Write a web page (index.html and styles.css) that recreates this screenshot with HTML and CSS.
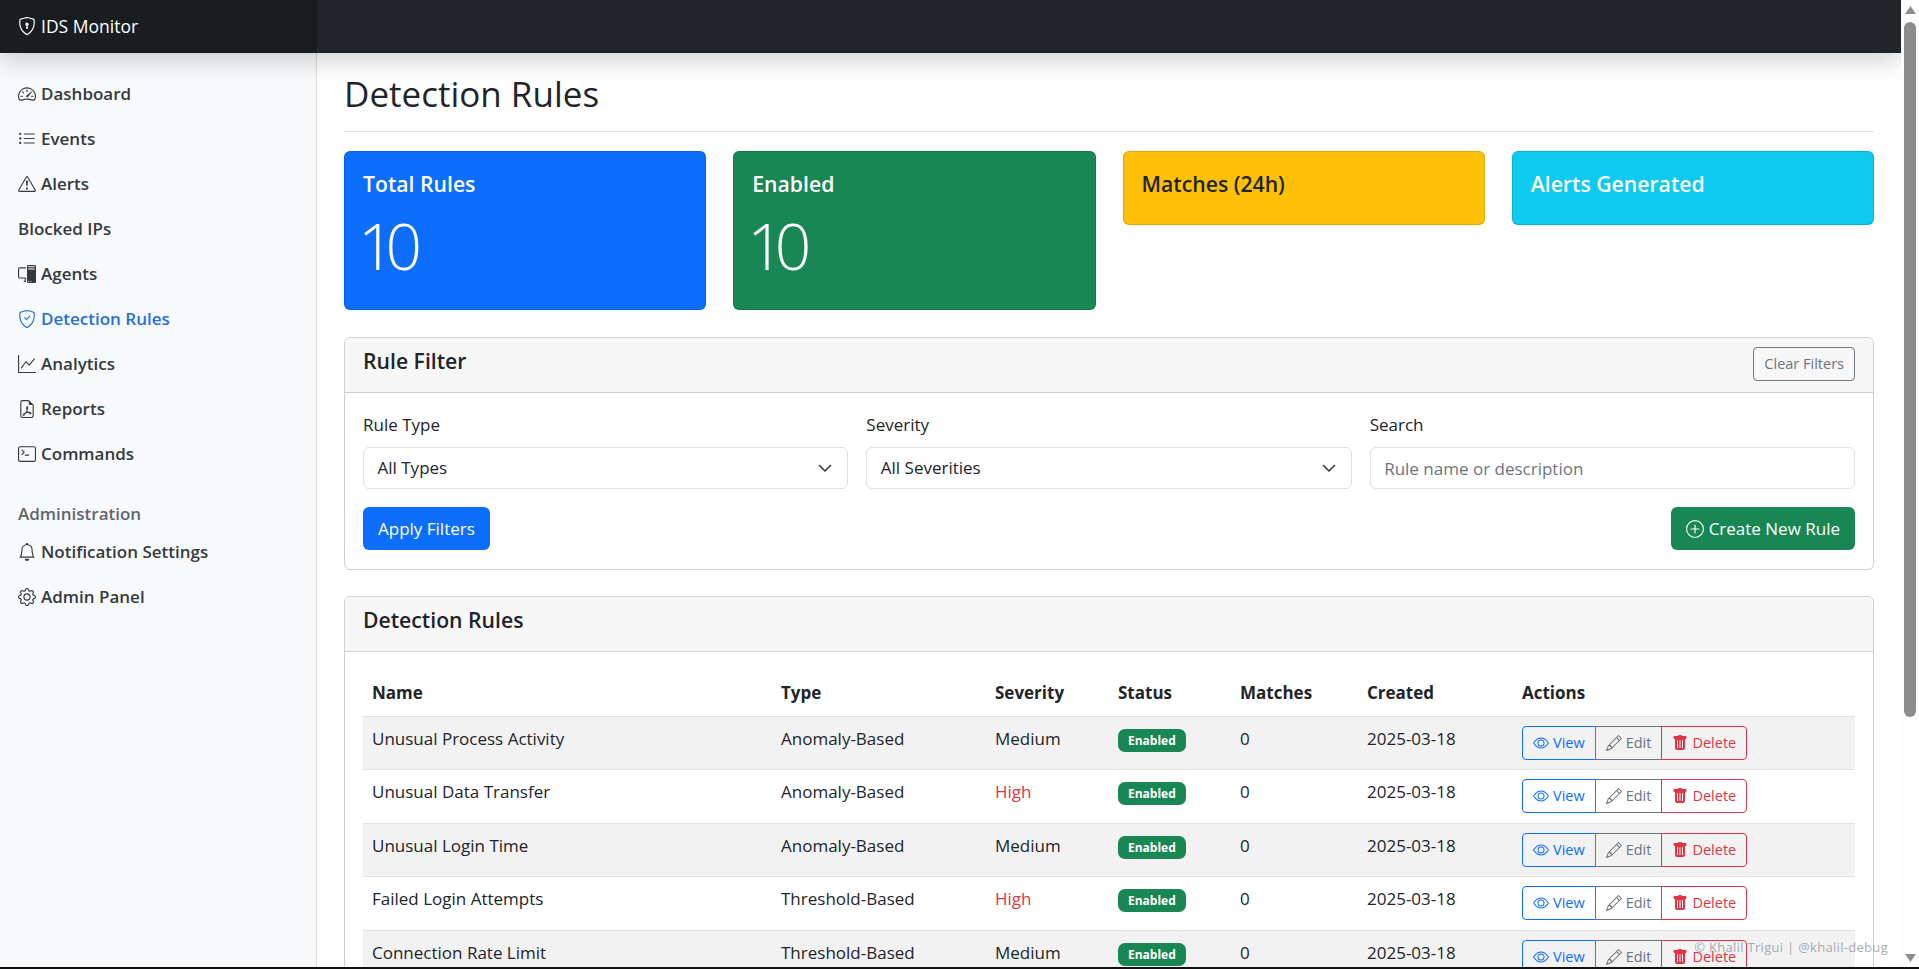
FILE: index.html
```html
<!DOCTYPE html>
<html lang="en">
<head>
  <meta charset="UTF-8" />
  <title>Detection Rules - IDS Monitor</title>
  <link rel="stylesheet" href="styles.css">
</head>
<body>

<div class="viewport">
  <header class="navbar">
    <a class="brand" href="#">
      <svg class="icon" viewBox="0 0 16 16"><path d="M5.338 1.59a61 61 0 0 0-2.837.856.48.48 0 0 0-.328.39c-.554 4.157.726 7.19 2.253 9.188a10.7 10.7 0 0 0 2.287 2.233c.346.244.652.42.893.533q.18.085.293.118a1 1 0 0 0 .101.025 1 1 0 0 0 .1-.025q.114-.034.294-.118c.24-.113.547-.29.893-.533a10.7 10.7 0 0 0 2.287-2.233c1.527-1.997 2.807-5.031 2.253-9.188a.48.48 0 0 0-.328-.39c-.651-.213-1.75-.56-2.837-.855C9.552 1.29 8.531 1.067 8 1.067c-.53 0-1.552.223-2.662.524zM5.072.56C6.157.265 7.31 0 8 0s1.843.265 2.928.56c1.11.3 2.229.655 2.887.87a1.54 1.54 0 0 1 1.044 1.262c.596 4.477-.787 7.795-2.465 9.99a11.8 11.8 0 0 1-2.517 2.453 7 7 0 0 1-1.048.625c-.28.132-.581.24-.829.24s-.548-.108-.829-.24a7 7 0 0 1-1.048-.625 11.8 11.8 0 0 1-2.517-2.453C1.928 10.487.545 7.169 1.141 2.692A1.54 1.54 0 0 1 2.185 1.43 63 63 0 0 1 5.072.56"/><path d="M9.5 6.5a1.5 1.5 0 0 1-1 1.415l.385 1.99a.5.5 0 0 1-.491.595h-.788a.5.5 0 0 1-.49-.595l.384-1.99a1.5 1.5 0 1 1 2-1.415"/></svg>
      IDS Monitor
    </a>
  </header>

  <div class="layout">
    <aside class="sidebar">
      <nav class="side-nav">
        <a href="#"><svg class="icon" viewBox="0 0 16 16"><path d="M8 4a.5.5 0 0 1 .5.5V6a.5.5 0 0 1-1 0V4.5A.5.5 0 0 1 8 4M3.732 5.732a.5.5 0 0 1 .707 0l.915.914a.5.5 0 1 1-.708.708l-.914-.915a.5.5 0 0 1 0-.707M2 10a.5.5 0 0 1 .5-.5h1.586a.5.5 0 0 1 0 1H2.5A.5.5 0 0 1 2 10m9.5 0a.5.5 0 0 1 .5-.5h1.5a.5.5 0 0 1 0 1H12a.5.5 0 0 1-.5-.5m.754-4.246a.39.39 0 0 0-.527-.02L7.547 9.31a.91.91 0 1 0 1.302 1.258l3.434-4.297a.39.39 0 0 0-.029-.518z"/><path d="M0 10a8 8 0 1 1 15.547 2.661c-.442 1.253-1.845 1.602-2.932 1.25C11.309 13.488 9.475 13 8 13c-1.474 0-3.31.488-4.615.911-1.087.352-2.49.003-2.932-1.25A8 8 0 0 1 0 10m8-7a7 7 0 0 0-6.603 9.329c.203.575.923.876 1.68.63C4.397 12.533 6.358 12 8 12s3.604.532 4.923.96c.757.245 1.477-.056 1.68-.631A7 7 0 0 0 8 3"/></svg>Dashboard</a>
        <a href="#"><svg class="icon" viewBox="0 0 16 16"><path d="M5 11.5a.5.5 0 0 1 .5-.5h9a.5.5 0 0 1 0 1h-9a.5.5 0 0 1-.5-.5m0-4a.5.5 0 0 1 .5-.5h9a.5.5 0 0 1 0 1h-9a.5.5 0 0 1-.5-.5m0-4a.5.5 0 0 1 .5-.5h9a.5.5 0 0 1 0 1h-9a.5.5 0 0 1-.5-.5m-3 1a1 1 0 1 0 0-2 1 1 0 0 0 0 2m0 4a1 1 0 1 0 0-2 1 1 0 0 0 0 2m0 4a1 1 0 1 0 0-2 1 1 0 0 0 0 2"/></svg>Events</a>
        <a href="#"><svg class="icon" viewBox="0 0 16 16"><path d="M7.938 2.016A.13.13 0 0 1 8.002 2a.13.13 0 0 1 .063.016.15.15 0 0 1 .054.057l6.857 11.667c.036.06.035.124.002.183a.2.2 0 0 1-.054.06.1.1 0 0 1-.066.017H1.146a.1.1 0 0 1-.066-.017.2.2 0 0 1-.054-.06.18.18 0 0 1 .002-.183L7.884 2.073a.15.15 0 0 1 .054-.057m1.044-.45a1.13 1.13 0 0 0-1.96 0L.165 13.233c-.457.778.091 1.767.98 1.767h13.713c.889 0 1.438-.99.98-1.767z"/><path d="M7.002 12a1 1 0 1 1 2 0 1 1 0 0 1-2 0M7.1 5.995a.905.905 0 1 1 1.8 0l-.35 3.507a.552.552 0 0 1-1.1 0z"/></svg>Alerts</a>
        <a href="#">Blocked IPs</a>
        <a href="#"><svg class="icon" viewBox="0 0 16 16"><path d="M8 1a1 1 0 0 1 1-1h6a1 1 0 0 1 1 1v14a1 1 0 0 1-1 1H9a1 1 0 0 1-1-1zm1 13.500a.5.5 0 1 0 1 0 .5.5 0 0 0-1 0m2 0a.5.5 0 1 0 1 0 .5.5 0 0 0-1 0M9.500 1a.5.5 0 0 0 0 1h5a.5.5 0 0 0 0-1zM9 3.500a.5.5 0 0 0 .5.5h5a.5.5 0 0 0 0-1h-5a.5.5 0 0 0-.5.5M1.500 2A1.500 1.500 0 0 0 0 3.500v7A1.500 1.500 0 0 0 1.500 12H6v2h-.5a.5.5 0 0 0 0 1H7v-4H1.500a.5.5 0 0 1-.5-.5v-7a.5.5 0 0 1 .5-.5H7V2z"/></svg>Agents</a>
        <a href="#" class="active"><svg class="icon" viewBox="0 0 16 16"><path d="M5.338 1.59a61 61 0 0 0-2.837.856.48.48 0 0 0-.328.39c-.554 4.157.726 7.19 2.253 9.188a10.7 10.7 0 0 0 2.287 2.233c.346.244.652.42.893.533q.18.085.293.118a1 1 0 0 0 .101.025 1 1 0 0 0 .1-.025q.114-.034.294-.118c.24-.113.547-.29.893-.533a10.7 10.7 0 0 0 2.287-2.233c1.527-1.997 2.807-5.031 2.253-9.188a.48.48 0 0 0-.328-.39c-.651-.213-1.75-.56-2.837-.855C9.552 1.29 8.531 1.067 8 1.067c-.53 0-1.552.223-2.662.524zM5.072.56C6.157.265 7.31 0 8 0s1.843.265 2.928.56c1.11.3 2.229.655 2.887.87a1.54 1.54 0 0 1 1.044 1.262c.596 4.477-.787 7.795-2.465 9.99a11.8 11.8 0 0 1-2.517 2.453 7 7 0 0 1-1.048.625c-.28.132-.581.24-.829.24s-.548-.108-.829-.24a7 7 0 0 1-1.048-.625 11.8 11.8 0 0 1-2.517-2.453C1.928 10.487.545 7.169 1.141 2.692A1.54 1.54 0 0 1 2.185 1.43 63 63 0 0 1 5.072.56"/><path d="M10.854 5.146a.5.5 0 0 1 0 .708l-3 3a.5.5 0 0 1-.708 0l-1.5-1.5a.5.5 0 1 1 .708-.708L7.500 7.793l2.646-2.647a.5.5 0 0 1 .708 0"/></svg>Detection Rules</a>
        <a href="#"><svg class="icon" viewBox="0 0 16 16"><path fill-rule="evenodd" d="M0 0h1v15h15v1H0zm14.817 3.113a.5.5 0 0 1 .07.704l-4.500 5.500a.5.5 0 0 1-.74.037L7.060 6.767l-3.656 5.027a.5.5 0 0 1-.808-.588l4-5.500a.5.5 0 0 1 .758-.060l2.609 2.610 4.150-5.073a.5.5 0 0 1 .704-.070"/></svg>Analytics</a>
        <a href="#"><svg class="icon" viewBox="0 0 16 16"><path d="M14 14V4.500L9.500 0H4a2 2 0 0 0-2 2v12a2 2 0 0 0 2 2h8a2 2 0 0 0 2-2M9.500 3A1.500 1.500 0 0 0 11 4.500h2V14a1 1 0 0 1-1 1H4a1 1 0 0 1-1-1V2a1 1 0 0 1 1-1h5.500z"/><path d="M4.603 14.087a.8.8 0 0 1-.438-.420c-.195-.388-.130-.776.080-1.102.198-.307.526-.568.897-.787a7.700 7.700 0 0 1 1.482-.645 20 20 0 0 0 1.062-2.227 7.300 7.300 0 0 1-.430-1.295c-.086-.400-.119-.796-.046-1.136.075-.354.274-.672.650-.823.192-.077.400-.120.602-.077a.7.7 0 0 1 .477.365c.088.164.120.356.127.538.007.188-.012.396-.047.614-.084.510-.270 1.134-.520 1.794a11 11 0 0 0 .980 1.686 5.800 5.800 0 0 1 1.334.050c.364.066.734.195.960.465.120.144.193.320.200.518.007.192-.047.382-.138.563a1.040 1.040 0 0 1-.354.416.860.860 0 0 1-.510.138c-.331-.014-.654-.196-.933-.417a5.700 5.700 0 0 1-.911-.950 11.700 11.700 0 0 0-1.997.406 11.300 11.300 0 0 1-1.020 1.510c-.292.350-.609.656-.927.787a.800.800 0 0 1-.580.029m1.379-1.901q-.250.046-.490.090c-.300.190-.500.400-.580.560-.040.080-.050.170-.010.250.020.040.050.060.090.060.130-.050.350-.200.600-.500.130-.150.260-.330.390-.460m2.100-3.100a14 14 0 0 1-.560 1.220 12 12 0 0 1 1.340-.260 12 12 0 0 1-.780-.960m-.280-2.170c.060-.370.060-.690-.010-.870-.060.030-.100.090-.130.200-.050.240-.030.560.040.890q.040.180.100.370"/></svg>Reports</a>
        <a href="#"><svg class="icon" viewBox="0 0 16 16"><path d="M6 9a.5.5 0 0 1 .5-.5h3a.5.5 0 0 1 0 1h-3A.5.5 0 0 1 6 9M3.854 4.146a.5.5 0 1 0-.708.708L4.793 6.500 3.146 8.146a.5.5 0 1 0 .708.708l2-2a.5.5 0 0 0 0-.708z"/><path d="M2 1a2 2 0 0 0-2 2v10a2 2 0 0 0 2 2h12a2 2 0 0 0 2-2V3a2 2 0 0 0-2-2zm12 1a1 1 0 0 1 1 1v10a1 1 0 0 1-1 1H2a1 1 0 0 1-1-1V3a1 1 0 0 1 1-1z"/></svg>Commands</a>
      </nav>

      <div class="side-heading">Administration</div>
      <nav class="side-nav">
        <a href="#"><svg class="icon" viewBox="0 0 16 16"><path d="M8 16a2 2 0 0 0 2-2H6a2 2 0 0 0 2 2M8 1.918l-.797.161A4 4 0 0 0 4 6c0 .628-.134 2.197-.459 3.742-.160.767-.376 1.566-.663 2.258h10.244c-.287-.692-.502-1.491-.663-2.258C12.134 8.197 12 6.628 12 6a4 4 0 0 0-3.203-3.920zM14.220 12c.223.447.481.801.780 1H1c.299-.199.557-.553.780-1C2.680 10.200 3 6.880 3 6c0-2.420 1.720-4.440 4.005-4.901a1 1 0 1 1 1.990 0A5 5 0 0 1 13 6c0 .880.320 4.200 1.220 6"/></svg>Notification Settings</a>
        <a href="#"><svg class="icon" viewBox="0 0 16 16"><path d="M8 4.754a3.246 3.246 0 1 0 0 6.492 3.246 3.246 0 0 0 0-6.492M5.754 8a2.246 2.246 0 1 1 4.492 0 2.246 2.246 0 0 1-4.492 0"/><path d="M9.796 1.343c-.527-1.790-3.065-1.790-3.592 0l-.094.319a.873.873 0 0 1-1.255.520l-.292-.160c-1.640-.892-3.433.902-2.540 2.541l.159.292a.873.873 0 0 1-.520 1.255l-.319.094c-1.790.527-1.790 3.065 0 3.592l.319.094a.873.873 0 0 1 .520 1.255l-.160.292c-.892 1.640.901 3.434 2.541 2.540l.292-.159a.873.873 0 0 1 1.255.520l.094.319c.527 1.790 3.065 1.790 3.592 0l.094-.319a.873.873 0 0 1 1.255-.520l.292.160c1.640.893 3.434-.902 2.540-2.541l-.159-.292a.873.873 0 0 1 .520-1.255l.319-.094c1.790-.527 1.790-3.065 0-3.592l-.319-.094a.873.873 0 0 1-.520-1.255l.160-.292c.893-1.640-.902-3.433-2.541-2.540l-.292.159a.873.873 0 0 1-1.255-.520zm-2.633.283c.246-.835 1.428-.835 1.674 0l.094.319a1.873 1.873 0 0 0 2.693 1.115l.291-.160c.764-.415 1.600.420 1.184 1.185l-.159.292a1.873 1.873 0 0 0 1.116 2.692l.318.094c.835.246.835 1.428 0 1.674l-.319.094a1.873 1.873 0 0 0-1.115 2.693l.160.291c.415.764-.420 1.600-1.185 1.184l-.291-.159a1.873 1.873 0 0 0-2.693 1.116l-.094.318c-.246.835-1.428.835-1.674 0l-.094-.319a1.873 1.873 0 0 0-2.692-1.115l-.292.160c-.764.415-1.600-.420-1.184-1.185l.159-.291A1.873 1.873 0 0 0 1.945 8.930l-.319-.094c-.835-.246-.835-1.428 0-1.674l.319-.094A1.873 1.873 0 0 0 3.060 4.377l-.160-.292c-.415-.764.420-1.600 1.185-1.184l.292.159a1.873 1.873 0 0 0 2.692-1.115z"/></svg>Admin Panel</a>
      </nav>
    </aside>

    <main class="content">
      <h1 class="page-title">Detection Rules</h1>

      <div class="stats">
        <div class="stat bg-blue">
          <h5>Total Rules</h5>
          <p class="stat-num">10</p>
        </div>
        <div class="stat bg-green">
          <h5>Enabled</h5>
          <p class="stat-num">10</p>
        </div>
        <div class="stat bg-yellow">
          <h5>Matches (24h)</h5>
        </div>
        <div class="stat bg-cyan">
          <h5>Alerts Generated</h5>
        </div>
      </div>

      <section class="card">
        <div class="card-header">
          <h5>Rule Filter</h5>
          <button class="btn btn-sm btn-outline-gray">Clear Filters</button>
        </div>
        <div class="card-body">
          <div class="filters">
            <div class="field">
              <label>Rule Type</label>
              <div class="select">All Types<svg viewBox="0 0 16 16"><path fill="none" stroke="#343a40" stroke-linecap="round" stroke-linejoin="round" stroke-width="1.6" d="m2.500 5.500 5.500 5.500 5.500-5.500"/></svg></div>
            </div>
            <div class="field">
              <label>Severity</label>
              <div class="select">All Severities<svg viewBox="0 0 16 16"><path fill="none" stroke="#343a40" stroke-linecap="round" stroke-linejoin="round" stroke-width="1.6" d="m2.500 5.500 5.500 5.500 5.500-5.500"/></svg></div>
            </div>
            <div class="field">
              <label>Search</label>
              <input class="input" type="text" placeholder="Rule name or description">
            </div>
          </div>
          <div class="filter-actions">
            <button class="btn btn-blue">Apply Filters</button>
            <button class="btn btn-green"><svg class="icon" viewBox="0 0 16 16"><path d="M8 15A7 7 0 1 1 8 1a7 7 0 0 1 0 14m0 1A8 8 0 1 0 8 0a8 8 0 0 0 0 16"/><path d="M8 4a.5.5 0 0 1 .5.5v3h3a.5.5 0 0 1 0 1h-3v3a.5.5 0 0 1-1 0v-3h-3a.5.5 0 0 1 0-1h3v-3A.5.5 0 0 1 8 4"/></svg>Create New Rule</button>
          </div>
        </div>
      </section>

      <section class="card">
        <div class="card-header">
          <h5>Detection Rules</h5>
        </div>
        <div class="card-body">
          <table class="rules">
            <thead>
              <tr><th class="c-name">Name</th><th class="c-type">Type</th><th class="c-sev">Severity</th><th class="c-status">Status</th><th class="c-match">Matches</th><th class="c-date">Created</th><th>Actions</th></tr>
            </thead>
            <tbody id="rows"></tbody>
          </table>
        </div>
      </section>
    </main>
  </div>

  <div class="credit">© Khalil Trigui | @khalil-debug</div>
</div>

<div class="scrollbar">
  <svg class="arrow" viewBox="0 0 14 11"><path d="M7 1 1 10h12z"/></svg>
  <div class="thumb-track"><div class="thumb"></div></div>
  <svg class="arrow" viewBox="0 0 14 11"><path d="M7 10 1 1h12z"/></svg>
</div>

<script>
  // lignes du tableau
  const rules = [
    ['Unusual Process Activity', 'Anomaly-Based', 'Medium'],
    ['Unusual Data Transfer', 'Anomaly-Based', 'High'],
    ['Unusual Login Time', 'Anomaly-Based', 'Medium'],
    ['Failed Login Attempts', 'Threshold-Based', 'High'],
    ['Connection Rate Limit', 'Threshold-Based', 'Medium']
  ];
  const eye = '<svg class="icon" viewBox="0 0 16 16"><path d="M16 8s-3-5.500-8-5.500S0 8 0 8s3 5.500 8 5.500S16 8 16 8M1.173 8a13 13 0 0 1 1.660-2.043C4.120 4.668 5.880 3.500 8 3.500s3.879 1.168 5.168 2.457A13 13 0 0 1 14.828 8q-.086.130-.195.288c-.335.480-.830 1.120-1.465 1.755C11.879 11.332 10.119 12.500 8 12.500s-3.879-1.168-5.168-2.457A13 13 0 0 1 1.172 8z"/><path d="M8 5.500a2.500 2.500 0 1 0 0 5 2.500 2.500 0 0 0 0-5M4.500 8a3.500 3.500 0 1 1 7 0 3.500 3.500 0 0 1-7 0"/></svg>';
  const pencil = '<svg class="icon" viewBox="0 0 16 16"><path d="M12.146.146a.5.5 0 0 1 .708 0l3 3a.5.5 0 0 1 0 .708l-10 10a.5.5 0 0 1-.168.110l-5 2a.5.5 0 0 1-.650-.650l2-5a.5.5 0 0 1 .110-.168zM11.207 2.500 13.500 4.793 14.793 3.500 12.500 1.207zm1.586 3L10.500 3.207 4 9.707V10h.5a.5.5 0 0 1 .5.500v.500h.500a.5.5 0 0 1 .500.500v.500h.293zm-9.761 5.175-.106.106-1.528 3.821 3.821-1.528.106-.106A.5.5 0 0 1 5 12.500V12h-.500a.5.5 0 0 1-.500-.500V11h-.500a.5.5 0 0 1-.468-.325"/></svg>';
  const trash = '<svg class="icon" viewBox="0 0 16 16"><path d="M2.500 1a1 1 0 0 0-1 1v1a1 1 0 0 0 1 1H3v9a2 2 0 0 0 2 2h6a2 2 0 0 0 2-2V4h.500a1 1 0 0 0 1-1V2a1 1 0 0 0-1-1H10a1 1 0 0 0-1-1H7a1 1 0 0 0-1 1zm3 4a.5.5 0 0 1 .5.500v7a.5.5 0 0 1-1 0v-7a.5.5 0 0 1 .5-.500M8 5a.5.5 0 0 1 .5.500v7a.5.5 0 0 1-1 0v-7A.5.5 0 0 1 8 5m3 .5v7a.5.5 0 0 1-1 0v-7a.5.5 0 0 1 1 0"/></svg>';

  document.getElementById('rows').innerHTML = rules.map(r => `
    <tr>
      <td>${r[0]}</td>
      <td>${r[1]}</td>
      <td class="${r[2] === 'High' ? 'sev-high' : ''}">${r[2]}</td>
      <td><span class="badge">Enabled</span></td>
      <td>0</td>
      <td>2025-03-18</td>
      <td><div class="btn-group">
        <button class="btn btn-sm btn-outline-blue">${eye}View</button><button class="btn btn-sm btn-outline-gray">${pencil}Edit</button><button class="btn btn-sm btn-outline-red">${trash}Delete</button>
      </div></td>
    </tr>`).join('');
</script>

</body>
</html>
```

FILE: styles.css
```css
* { margin: 0; padding: 0; box-sizing: border-box; }

html, body { height: 100%; overflow: hidden; }

body {
  display: flex;
  font-family: "Open Sans", "Noto Sans", sans-serif;
  font-size: 17px;
  line-height: 26px;
  color: #212529;
  background: #fff;
  border-bottom: 2px solid #111;
}

a { text-decoration: none; color: inherit; }

.icon {
  width: 18px;
  height: 18px;
  fill: currentColor;
  flex: none;
}

.viewport {
  flex: 1;
  min-width: 0;
  display: flex;
  flex-direction: column;
  position: relative;
  overflow: hidden;
}

/* Barre du haut */
.navbar {
  height: 53px;
  flex: none;
  background: #212529;
  box-shadow: 0 8px 24px rgba(0, 0, 0, 0.18);
  position: relative;
  z-index: 5;
}
.brand {
  width: 317px;
  height: 100%;
  display: flex;
  align-items: center;
  gap: 5px;
  padding: 0 0 1px 18px;
  background: #1a1d20;
  color: #fff;
  font-size: 17.5px;
}

.layout {
  flex: 1;
  min-height: 0;
  display: flex;
}

/* Colonne de gauche */
.sidebar {
  width: 317px;
  flex: none;
  background: #f8f9fa;
  border-right: 1px solid #dcdcdc;
  padding-top: 18px;
  font-weight: 560;
}
.side-nav a {
  height: 45px;
  display: flex;
  align-items: center;
  gap: 5px;
  padding-left: 18px;
  color: #343a40;
}
.side-nav a.active { color: #2470dc; }
.side-heading {
  margin-top: 23px;
  height: 30px;
  padding-left: 18px;
  color: #5f666d;
  display: flex;
  align-items: center;
}

/* Contenu */
.content {
  flex: 1;
  min-width: 0;
  padding: 0 27px;
  overflow: hidden;
}
.page-title {
  font-size: 35px;
  font-weight: 500;
  line-height: 42px;
  padding: 20px 0 16px;
  border-bottom: 1px solid #dee2e6;
  margin-bottom: 19px;
}

.stats {
  display: grid;
  grid-template-columns: repeat(4, 1fr);
  gap: 27px;
  align-items: start;
  margin-bottom: 27px;
}
.stat {
  padding: 19px 18px;
  border-radius: 6px;
  border: 1px solid rgba(0, 0, 0, 0.125);
  color: #fff;
}
.stat h5 {
  font-size: 21.2px;
  font-weight: 600;
  line-height: 26px;
  margin-bottom: 8px;
}
.stat-num {
  font-size: 64px;
  font-weight: 300;
  line-height: 82px;
  letter-spacing: -9px;
  margin-left: -5px;
  height: 85px;
}
.bg-blue { background: #0d6efd; }
.bg-green { background: #198754; }
.bg-yellow { background: #ffc107; color: #212529; }
.bg-cyan { background: #0dcaf0; }

.card {
  border: 1px solid #cfd0d1;
  border-radius: 6px;
  margin-bottom: 26px;
  background: #fff;
}
.card-header {
  height: 55px;
  display: flex;
  justify-content: space-between;
  align-items: center;
  padding: 0 18px;
  background: #f7f7f7;
  border-bottom: 1px solid #cfd0d1;
  border-radius: 6px 6px 0 0;
}
.card-header h5 {
  font-size: 21.2px;
  font-weight: 600;
  line-height: 26px;
  margin-bottom: 8px;
}
.card-header .btn { margin-bottom: 2px; }
.card-body { padding: 19px 18px; }

/* Filtres */
.filters {
  display: grid;
  grid-template-columns: 1fr 1fr 1fr;
  gap: 18px;
}
.field label {
  display: block;
  margin-bottom: 9px;
}
.select, .input {
  width: 100%;
  height: 42px;
  display: flex;
  align-items: center;
  justify-content: space-between;
  padding: 0 14px 0 13.5px;
  border: 1px solid #dee2e6;
  border-radius: 6px;
  background: #fff;
  color: #212529;
  font: inherit;
}
.select svg { width: 16px; height: 16px; }
.input::placeholder { color: #6c757d; opacity: 1; }
.filter-actions {
  display: flex;
  justify-content: space-between;
  margin-top: 18px;
}

/* Boutons */
.btn {
  display: inline-flex;
  align-items: center;
  justify-content: center;
  gap: 5px;
  height: 43px;
  padding: 0 14px;
  border-radius: 6px;
  border: 1px solid transparent;
  font: inherit;
  background: none;
  color: #fff;
}
.btn-blue { background: #0d6efd; }
.btn-green { background: #198754; }
.btn-sm {
  height: 34px;
  padding: 0 10px;
  gap: 4px;
  font-size: 14.5px;
  border-radius: 4px;
}
.btn-sm .icon { width: 16px; height: 16px; }
.btn-outline-gray { border-color: #6c757d; color: #6c757d; }
.btn-outline-blue { border-color: #0d6efd; color: #0d6efd; }
.btn-outline-red { border-color: #dc3545; color: #dc3545; }
.btn-group { display: inline-flex; }
.btn-group .btn { border-radius: 0; margin-left: -1px; }
.btn-group .btn:first-child { border-radius: 4px 0 0 4px; margin-left: 0; }
.btn-group .btn:last-child { border-radius: 0 4px 4px 0; }

/* Tableau */
.rules {
  width: 100%;
  border-collapse: collapse;
}
.rules th {
  text-align: left;
  font-weight: 700;
  padding: 9px;
  height: 45px;
  border-bottom: 1px solid #dee2e6;
}
.rules td {
  padding: 9px;
  vertical-align: top;
  height: 53.6px;
  border-bottom: 1px solid #dee2e6;
}
.rules tbody tr:nth-child(odd) td { background: #f2f2f2; }
.c-name { width: 409px; }
.c-type { width: 214px; }
.c-sev { width: 123px; }
.c-status { width: 122px; }
.c-match { width: 127px; }
.c-date { width: 155px; }
.sev-high { color: #dc3545; }
.badge {
  display: inline-block;
  padding: 2px 10px;
  border-radius: 7px;
  background: #198754;
  color: #fff;
  font-size: 12px;
  font-weight: 700;
  line-height: 19px;
}

.credit {
  position: absolute;
  right: 13px;
  bottom: 7px;
  font-size: 13px;
  letter-spacing: 0.3px;
  color: rgba(108, 117, 125, 0.6);
}

/* Barre de défilement */
.scrollbar {
  width: 18px;
  flex: none;
  display: flex;
  flex-direction: column;
  gap: 7px;
  padding: 5px 2px 4px 3px;
  background: #fdfdfd;
}
.arrow { width: 13px; height: 10px; fill: #8c8c8c; flex: none; }
.thumb-track { flex: 1; }
.thumb { height: 695px; width: 12px; background: #8c8c8c; border-radius: 6px; }
```
